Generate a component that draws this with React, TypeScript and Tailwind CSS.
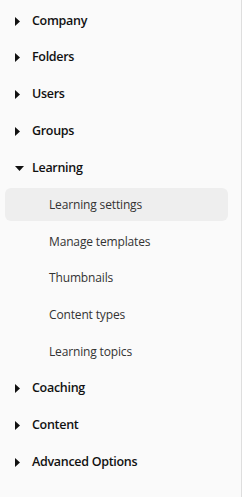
import { useState } from "react";

type Section = { label: string; children?: string[] };

const sections: Section[] = [
  { label: "Company" },
  { label: "Folders" },
  { label: "Users" },
  { label: "Groups" },
  {
    label: "Learning",
    children: [
      "Learning settings",
      "Manage templates",
      "Thumbnails",
      "Content types",
      "Learning topics",
    ],
  },
  { label: "Coaching" },
  { label: "Content" },
  { label: "Advanced Options" },
];

const Caret = ({ open }: { open: boolean }) =>
  open ? (
    <svg width="9" height="5" viewBox="0 0 9 5" className="shrink-0">
      <path d="M0 0h9L4.5 5z" fill="#111" />
    </svg>
  ) : (
    <svg width="5" height="9" viewBox="0 0 5 9" className="shrink-0">
      <path d="M0 0l5 4.5L0 9z" fill="#111" />
    </svg>
  );

export default function App() {
  const [active, setActive] = useState("Learning settings");
  const [open, setOpen] = useState<string | null>("Learning");

  return (
    <div
      className="w-[242px] h-[497px] bg-[#fafafa] border-r border-[#dedede] overflow-hidden"
      style={{ fontFamily: '"Open Sans", "Noto Sans", sans-serif' }}
    >
      <ul className="flex flex-col gap-[3.75px] pt-[4.5px] pl-[5px] pr-[13px]">
        {sections.map((s) => {
          const isOpen = open === s.label;
          return (
            <li key={s.label} className="flex flex-col gap-[3.75px]">
              <button
                type="button"
                onClick={() => setOpen(isOpen ? null : s.label)}
                className="flex h-[33px] items-center text-left"
              >
                <span className="flex w-[27px] justify-start pl-[10px]">
                  <Caret open={isOpen} />
                </span>
                <span className="text-[12.5px] font-semibold tracking-[-0.3px] text-[#111]">
                  {s.label}
                </span>
              </button>
              {isOpen &&
                s.children?.map((c) => (
                  <button
                    key={c}
                    type="button"
                    onClick={() => setActive(c)}
                    className={`flex h-[33px] items-center rounded-md pl-[44px] text-left text-[12px] tracking-[-0.15px] text-[#333] ${
                      active === c ? "bg-[#eeeeee]" : ""
                    }`}
                  >
                    {c}
                  </button>
                ))}
            </li>
          );
        })}
      </ul>
    </div>
  );
}
